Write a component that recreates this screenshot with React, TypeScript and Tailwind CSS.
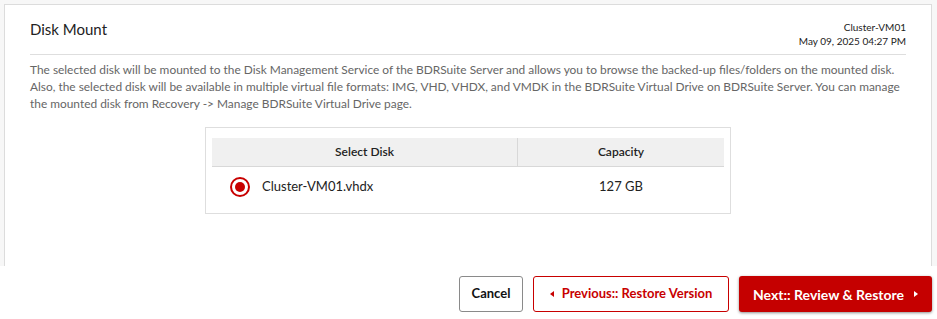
import React from 'react';

const disks = [{ name: 'Cluster-VM01.vhdx', capacity: '127 GB' }];

function Radio({ checked }: { checked: boolean }) {
  return (
    <span className="flex h-[20px] w-[20px] items-center justify-center rounded-full border-[2.5px] border-[#c80000] bg-white">
      {checked && <span className="h-[10px] w-[10px] rounded-full bg-[#c80000]" />}
    </span>
  );
}

export default function App() {
  return (
    <div className="h-[319px] w-[937px] overflow-hidden bg-white font-['Lato','Liberation_Sans',sans-serif]">
      {/* Panel */}
      <div className="h-[266px] bg-[#f7f7f7] pl-[4px] pr-[5px] pt-[4px]">
        <div className="h-full border-l border-r border-t border-[#dcdcdc] bg-white px-[25px]">
          {/* Header */}
          <div className="flex items-start justify-between border-b border-[#dedede] pb-[6px] pt-[15px]">
            <div className="mt-[-1px] text-[15px] leading-[20px] text-[#222]">Disk Mount</div>
            <div className="text-right text-[10px] leading-[14px] text-[#222]">
              <div>Cluster-VM01</div>
              <div>May 09, 2025 04:27 PM</div>
            </div>
          </div>

          <p className="pt-[6px] text-[11.9px] leading-[17px] text-[#666]">
            The selected disk will be mounted to the Disk Management Service of the BDRSuite Server and allows you to browse the backed-up files/folders on the mounted disk. Also, the selected disk will be available in multiple virtual file formats: IMG, VHD, VHDX, and VMDK in the BDRSuite Virtual Drive on BDRSuite Server. You can manage the mounted disk from Recovery -&gt; Manage BDRSuite Virtual Drive page.
          </p>

          {/* Disk table */}
          <div className="mx-auto mt-[15px] w-[526px] border border-[#dedede] px-[6px] pb-[6px] pt-[10px]">
            <div className="grid grid-cols-[306px_1fr] bg-[#f0f0f0] text-[12px] font-semibold text-[#222]">
              <div className="flex h-[29px] items-center justify-center border-b border-r border-[#d8d8d8]">Select Disk</div>
              <div className="flex h-[29px] items-center justify-center border-b border-[#d8d8d8]">Capacity</div>
            </div>
            {disks.map(d => (
              <div key={d.name} className="grid h-[40px] grid-cols-[306px_1fr] items-center text-[13px] text-[#222]">
                <div className="flex items-center gap-[12px] pl-[18px]">
                  <Radio checked />
                  <span>{d.name}</span>
                </div>
                <div className="text-center">{d.capacity}</div>
              </div>
            ))}
          </div>
        </div>
      </div>

      {/* Footer buttons */}
      <div className="mt-[10px] flex justify-end gap-[10px] pr-[5px]">
        <button className="flex h-[36px] w-[64px] items-center justify-center rounded-[3px] border border-[#8a8a8a] bg-white text-[13px] font-bold text-[#111]">
          Cancel
        </button>
        <button className="flex h-[36px] w-[196px] items-center justify-center gap-[8px] rounded-[3px] border border-[#c80000] bg-white text-[13px] font-bold text-[#c80000]">
          <span className="h-0 w-0 border-y-[3.5px] border-r-[4px] border-y-transparent border-r-[#c80000]" />
          Previous:: Restore Version
        </button>
        <button className="flex h-[36px] w-[193px] items-center justify-center gap-[10px] rounded-[3px] bg-[#c50000] text-[14px] font-bold text-white shadow-[0_1px_3px_rgba(0,0,0,0.45)]">
          Next:: Review &amp; Restore
          <span className="h-0 w-0 border-y-[3.5px] border-l-[4px] border-y-transparent border-l-white" />
        </button>
      </div>
    </div>
  );
}
